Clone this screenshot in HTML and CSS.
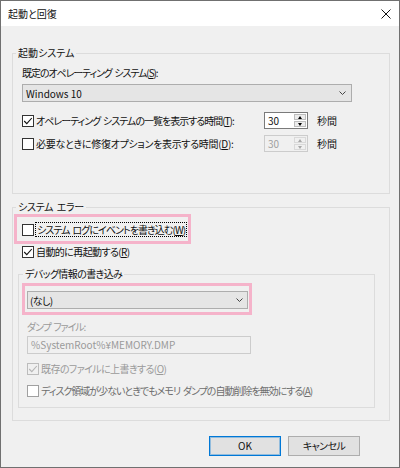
FILE: index.html
```html
<!DOCTYPE html>
<html lang="ja">
<head>
<meta charset="utf-8">
<link rel="stylesheet" href="styles.css">
</head>
<body>
<div class="window">
  <div class="titlebar">
    <span class="title">起動と回復</span>
    <svg class="close" width="10" height="10" viewBox="0 0 10 10"><path d="M0.5 0.5L9.5 9.5M9.5 0.5L0.5 9.5" stroke="#111" stroke-width="1" fill="none"/></svg>
  </div>
  <div class="content">
    <div class="group g1">
      <div class="legend l1 t-loose">起動システム</div>
      <div class="label t-tight">既定のオペレーティング システム(<u>S</u>):</div>
      <div class="combo c1"><span class="latin">Windows 10</span><svg width="7" height="4" viewBox="0 0 7 4"><polyline points="0.5,0.5 3.5,3.5 6.5,0.5" fill="none" stroke="#444" stroke-width="1"/></svg></div>
      <div class="spinrow r1">
        <div class="cbwrap">
          <span class="cb"><svg width="10" height="10" viewBox="0 0 10 10"><polyline points="1.2,5 3.8,7.6 8.8,2" fill="none" stroke="#111" stroke-width="1.1"/></svg></span>
          <span class="cbtext t-tight2">オペレーティング システムの一覧を表示する時間(<u>T</u>):</span>
        </div>
        <div class="spin">
          <span class="val latin">30</span>
          <span class="btns"><span class="sbtn"><i class="up"></i></span><span class="sbtn"><i class="down"></i></span></span>
        </div>
        <span class="unit">秒間</span>
      </div>
      <div class="spinrow r2">
        <div class="cbwrap">
          <span class="cb"></span>
          <span class="cbtext t-mid">必要なときに修復オプションを表示する時間(<u>D</u>):</span>
        </div>
        <div class="spin disabled">
          <span class="val latin">30</span>
          <span class="btns"><span class="sbtn"><i class="up"></i></span><span class="sbtn"><i class="down"></i></span></span>
        </div>
        <span class="unit">秒間</span>
      </div>
    </div>

    <div class="group g2">
      <div class="legend l2 t-mid">システム エラー</div>
      <div class="hl hl1">
        <div class="cbrow">
          <span class="cb"></span>
          <span class="focus t-tight3">システム ログにイベントを書き込む(<u>W</u>)</span>
        </div>
      </div>
      <div class="cbrow ind">
        <span class="cb"><svg width="10" height="10" viewBox="0 0 10 10"><polyline points="1.2,5 3.8,7.6 8.8,2" fill="none" stroke="#111" stroke-width="1.1"/></svg></span>
        <span class="cbtext">自動的に再起動する(<u>R</u>)</span>
      </div>
      <div class="group g3">
        <div class="legend l3">デバッグ情報の書き込み</div>
        <div class="hl hl2">
          <div class="combo c2"><span>(なし)</span><svg width="7" height="4" viewBox="0 0 7 4"><polyline points="0.5,0.5 3.5,3.5 6.5,0.5" fill="none" stroke="#444" stroke-width="1"/></svg></div>
        </div>
        <div class="label dis dumplabel t-tight">ダンプ ファイル:</div>
        <div class="textbox latin">%SystemRoot%¥MEMORY.DMP</div>
        <div class="cbrow sub r5">
          <span class="cb cbdis"><svg width="10" height="10" viewBox="0 0 10 10"><polyline points="1.2,5 3.8,7.6 8.8,2" fill="none" stroke="#b5b5b5" stroke-width="1.1"/></svg></span>
          <span class="cbtext dis">既存のファイルに上書きする(<u>O</u>)</span>
        </div>
        <div class="cbrow sub r6">
          <span class="cb cbdis2"></span>
          <span class="cbtext dis2 t-tight2">ディスク領域が少ないときでもメモリ ダンプの自動削除を無効にする(<u>A</u>)</span>
        </div>
      </div>
    </div>

    <div class="buttons">
      <button class="btn default latin">OK</button>
      <button class="btn">キャンセル</button>
    </div>
  </div>
</div>
</body>
</html>
```

FILE: styles.css
```css
* { box-sizing: border-box; }
html, body { margin: 0; padding: 0; background: #f0f0f0; }
body {
  font-family: "Noto Sans CJK JP", "Noto Sans", sans-serif;
  font-size: 10px;
  color: #111;
  font-feature-settings: "palt";
  letter-spacing: -0.6px;
  word-spacing: 1.5px;
}
.latin { letter-spacing: 0; word-spacing: 0; }
.t-tight { letter-spacing: -1.1px; }
.t-tight2 { letter-spacing: -1px; }
.t-tight3 { letter-spacing: -0.95px; }
.t-mid { letter-spacing: -0.3px; }
.t-loose { letter-spacing: 0; }
.window {
  width: 400px;
  height: 468px;
  border: 1px solid #707070;
  background: #f0f0f0;
  display: flex;
  flex-direction: column;
}
.titlebar {
  flex: none;
  height: 25px;
  background: #fff;
  display: flex;
  align-items: center;
  justify-content: space-between;
  padding: 0 8px 0 7px;
}
.title { line-height: 14px; letter-spacing: 0; }
.close { display: block; }
.content {
  flex: 1;
  padding: 0 9px 0 11px;
}
.group { border: 1px solid #dcdcdc; }
.legend {
  margin-top: -8px;
  height: 14px;
  line-height: 14px;
  padding: 0 2px;
  background: #f0f0f0;
  width: max-content;
}
.g1 { margin-top: 27px; padding: 0 0 41px 9px; }
.l1 { margin-left: -6px; }
.label { line-height: 14px; height: 14px; }
.g1 .label { margin-top: 6px; }
.combo {
  height: 18px;
  background: #e5e5e5;
  border: 1px solid #adadad;
  display: flex;
  align-items: center;
  justify-content: space-between;
}
.combo svg { display: block; }
.c1 { margin-top: 4px; width: 330px; padding: 0 5px 0 3px; }
.spinrow { display: flex; align-items: center; height: 17px; }
.r1 { margin-top: 10px; }
.r2 { margin-top: 6px; }
.cbwrap { width: 242px; display: flex; align-items: center; }
.cb {
  flex: none;
  width: 12px;
  height: 12px;
  border: 1px solid #333;
  background: #fff;
  margin-right: 2px;
  display: flex;
  align-items: center;
  justify-content: center;
}
.cb svg { display: block; }
.cbtext { line-height: 14px; white-space: nowrap; }
.spin {
  width: 44px;
  height: 17px;
  border: 1px solid #7a7a7a;
  background: #fff;
  display: flex;
}
.spin .val { flex: 1; padding-left: 3px; line-height: 15px; }
.btns {
  width: 13px;
  display: flex;
  flex-direction: column;
  gap: 1px;
  padding: 1px 1px 1px 0;
}
.sbtn {
  flex: 1;
  border: 1px solid #bdbdbd;
  background: #ececec;
  display: flex;
  align-items: center;
  justify-content: center;
}
.up, .down { width: 0; height: 0; border-left: 2.5px solid transparent; border-right: 2.5px solid transparent; }
.up { border-bottom: 3px solid #000; }
.down { border-top: 3px solid #000; }
.spin.disabled { border-color: #cccccc; background: #f0f0f0; color: #a0a0a0; }
.spin.disabled .sbtn { border-color: #d9d9d9; background: #f0f0f0; }
.spin.disabled .up { border-bottom-color: #a8a8a8; }
.spin.disabled .down { border-top-color: #a8a8a8; }
.unit { margin-left: 9px; line-height: 14px; letter-spacing: 0; }

.g2 { margin-top: 13px; padding: 0 14px 12px 5px; }
.l2 { margin-left: -2px; }
.hl { border: 3px solid #f5b3ca; width: max-content; }
.hl1 { margin-left: -4px; padding: 5px 1px 4px 5px; }
.cbrow { display: flex; align-items: center; height: 15px; }
.focus {
  border: 1px dotted #000;
  line-height: 13px;
  padding: 0 1px;
  margin-left: -1px;
  white-space: nowrap;
}
.ind { margin-left: 4px; }
.g3 { margin-top: 15px; padding: 0 0 9px 3px; }
.l3 { margin-left: 1px; }
.hl2 { margin-top: 2px; padding: 5px 1px 3px 2px; }
.c2 { width: 221px; padding: 0 4px 0 2px; }
.dis { color: #9a9a9a; }
.dis2 { color: #6d6d6d; }
.dumplabel { margin: 5px 0 0 5px; }
.textbox {
  margin: 2px 0 0 5px;
  width: 224px;
  height: 18px;
  border: 1px solid #cccccc;
  background: #f0f0f0;
  color: #9a9a9a;
  padding-left: 3px;
  line-height: 16px;
}
.sub { margin-left: 5px; margin-top: 7px; }
.cbdis { border-color: #bcbcbc; background: #f0f0f0; }
.cbdis2 { border-color: #a0a0a0; background: #fff; }

.buttons {
  margin-top: 15px;
  margin-right: 30px;
  display: flex;
  justify-content: flex-end;
  gap: 7px;
}
.btn {
  width: 72px;
  height: 20px;
  margin: 0;
  padding: 0;
  background: #e1e1e1;
  border: 1px solid #adadad;
  font-family: inherit;
  font-size: 10px;
  font-feature-settings: "palt";
  letter-spacing: -0.6px;
  color: #111;
  line-height: 16px;
}
.btn.latin { letter-spacing: 0; }
.btn.default { border-color: #0078d7; box-shadow: inset 0 0 0 1px rgba(0, 120, 215, 0.35); }
```
